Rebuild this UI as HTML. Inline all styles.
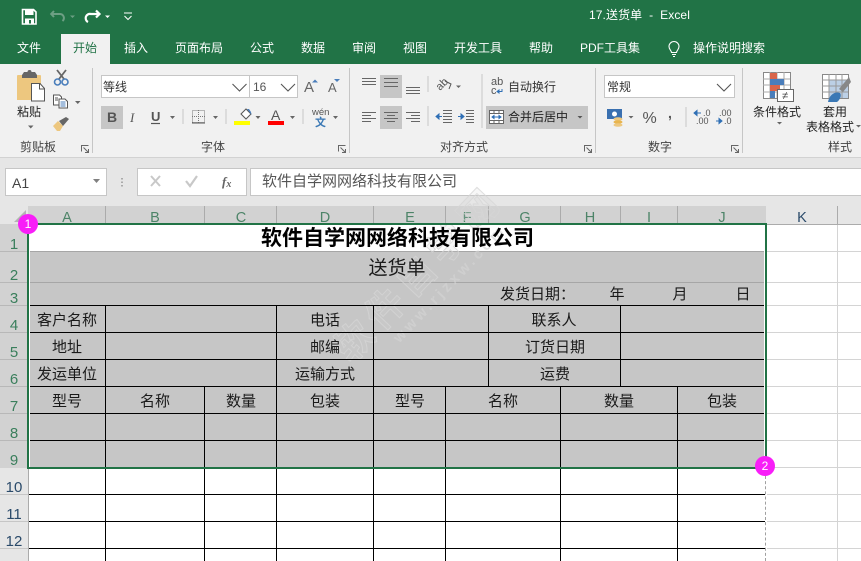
<!DOCTYPE html>
<html lang="zh"><head><meta charset="utf-8"><title>17.送货单 - Excel</title>
<style>
html,body{margin:0;padding:0}
body{width:861px;height:561px;overflow:hidden;position:relative;background:#fff;font-family:"Liberation Sans","Noto Sans CJK SC",sans-serif;color:#333}
div,span,svg{position:absolute}
.t{white-space:nowrap;font-size:12px;line-height:16px}
.w{color:#fff}
.g{font-size:12px;line-height:16px;white-space:nowrap;color:#444}
.box{background:#fff;border:1px solid #c6c6c6;box-sizing:border-box}
.c{font-size:15px;line-height:20px;color:#1a1a1a;white-space:nowrap;transform:translateX(-50%);letter-spacing:0}
.ch{font-size:14.500px;line-height:18px;top:209px;color:#4d8468;transform:translateX(-50%)}
.rh{font-size:15px;line-height:18px;left:0;width:28px;text-align:center;color:#3a7f5c}
.rn{color:#2a4a6a}
.k{background:#000}
</style></head><body>

<!-- title bar -->
<div style="left:0;top:0;width:861px;height:64px;background:#217346"></div>
<svg style="left:0;top:0" width="170" height="34" viewBox="0 0 170 34">
<path d="M22.500 9.500h11l2.500 2.500v12h-13.500z" fill="none" stroke="#fff" stroke-width="1.600"/>
<rect x="25" y="10" width="8.500" height="5" fill="#fff"/>
<rect x="25" y="18.500" width="9" height="5.500" fill="#fff"/><rect x="29" y="20" width="2" height="3.500" fill="#217346"/>
<path d="M54 11l-2.800 3 2.800 3M52 14h7.500a4 4 0 0 1 3 7" fill="none" stroke="#6d9f84" stroke-width="2"/>
<path d="M70 15.500h5l-2.500 2.500z" fill="#6d9f84"/>
<path d="M96 10.500l3.500 3.500-3.500 3.500M99 14h-8a4.300 4.300 0 0 0-3 8" fill="none" stroke="#fff" stroke-width="2.200"/>
<path d="M105 15.500h5l-2.500 2.500z" fill="#fff"/>
<path d="M124 13h8" stroke="#fff" stroke-width="1" fill="none"/>
<path d="M124.500 16l3.500 3.500 3.500-3.500" stroke="#fff" stroke-width="1" fill="none"/>
</svg>
<span class="t w" style="left:589px;top:7px;letter-spacing:.1px">17.送货单&nbsp;&nbsp;-&nbsp;&nbsp;Excel</span>

<!-- tabs -->
<div style="left:61px;top:34px;width:49px;height:30px;background:#f1f1f1"></div>
<span class="t w" style="left:17px;top:40px">文件</span>
<span class="t" style="left:73px;top:40px;color:#217346">开始</span>
<span class="t w" style="left:124px;top:40px">插入</span>
<span class="t w" style="left:175px;top:40px">页面布局</span>
<span class="t w" style="left:250px;top:40px">公式</span>
<span class="t w" style="left:301px;top:40px">数据</span>
<span class="t w" style="left:352px;top:40px">审阅</span>
<span class="t w" style="left:403px;top:40px">视图</span>
<span class="t w" style="left:454px;top:40px">开发工具</span>
<span class="t w" style="left:529px;top:40px">帮助</span>
<span class="t w" style="left:580px;top:40px">PDF工具集</span>
<svg style="left:665px;top:40px" width="18" height="18" viewBox="0 0 18 18"><path d="M6.500 12.500c0-2-2.500-3-2.500-6a5 5 0 0 1 10 0c0 3-2.500 4-2.500 6zM7 14.500h4M8 16.500h2" fill="none" stroke="#fff" stroke-width="1.100"/></svg>
<span class="t w" style="left:693px;top:40px">操作说明搜索</span>

<!-- ribbon -->
<div style="left:0;top:64px;width:861px;height:93px;background:#f1f1f1;border-bottom:1px solid #d2d2d2"></div>
<div style="left:0;top:158px;width:861px;height:48px;background:#e6e6e6"></div>
<div style="left:92px;top:68px;width:1px;height:85px;background:#c6c6c6"></div>
<div style="left:349px;top:68px;width:1px;height:85px;background:#c6c6c6"></div>
<div style="left:595px;top:68px;width:1px;height:85px;background:#c6c6c6"></div>
<div style="left:742px;top:68px;width:1px;height:85px;background:#c6c6c6"></div>

<!-- clipboard icons -->
<svg style="left:0;top:64px" width="92" height="72" viewBox="0 0 92 72">
<path d="M17 12a1 1 0 0 1 1-1h22a1 1 0 0 1 1 1v24h-24z" fill="#edc77f"/>
<path d="M22 11l2-3h3.500a2 2 0 0 1 4 0H35l2 3v3H22z" fill="#666"/>
<path d="M31.500 19.500h8.500l4.500 5v12.500h-13z" fill="#fff" stroke="#555" stroke-width="1"/>
<path d="M39.500 19.500v5.500h5" fill="none" stroke="#555"/>
<path d="M57 6l7 9M66 6l-7 9" stroke="#666" stroke-width="1.800" fill="none"/>
<circle cx="57.500" cy="18" r="3" fill="none" stroke="#4a7ebb" stroke-width="1.600"/><circle cx="65" cy="18" r="3" fill="none" stroke="#4a7ebb" stroke-width="1.600"/>
<path d="M53.500 31h6l2 2v8h-8z" fill="#fff" stroke="#555"/><path d="M59 35h6l2.500 2.500V44H59z" fill="#fff" stroke="#555"/>
<path d="M60.500 38h5M60.500 40h5M60.500 42h5" stroke="#4a7ebb" fill="none"/><path d="M55 34h3M55 36h3" stroke="#555"/>
<path d="M75 37h5.500l-2.750 3z" fill="#666"/>
<path d="M53 62l5-5 5 5-3 5h-3z" fill="#edc77f"/><path d="M59 57l7-4 3 2-6 7z" fill="#666"/>
<path d="M28 61.500h5.500l-2.750 3z" fill="#666"/>
</svg>
<span class="t" style="left:17px;top:104px;color:#222">粘贴</span>
<span class="g" style="left:20px;top:139px">剪贴板</span>

<!-- font group -->
<div class="box" style="left:101px;top:75px;width:149px;height:23px"></div>
<div class="box" style="left:249px;top:75px;width:49px;height:23px"></div>
<span class="t" style="left:103px;top:79px;color:#333">等线</span>
<span class="t" style="left:253px;top:79px;color:#555">16</span>
<div style="left:101px;top:106px;width:22px;height:23px;background:#c6c6c6"></div>
<svg style="left:100px;top:64px" width="250" height="70" viewBox="0 0 250 70">
<path d="M132.500 20l7 7 7-7M181 20l7 7 7-7" fill="none" stroke="#555" stroke-width="1.100"/>
<text x="204" y="28" font-size="15" fill="#666" font-family="Liberation Sans">A</text>
<path d="M212 18.500h6l-3-3z" fill="#4a7ebb"/>
<text x="228" y="28" font-size="13" fill="#666" font-family="Liberation Sans">A</text>
<path d="M234 15h6l-3 3z" fill="#4a7ebb"/>
<text x="7" y="58" font-size="14" font-weight="bold" fill="#555" font-family="Liberation Sans">B</text>
<text x="30" y="58" font-size="13" font-style="italic" fill="#555" font-family="Liberation Serif">I</text>
<text x="51" y="57" font-size="13" font-weight="bold" fill="#555" font-family="Liberation Sans">U</text>
<path d="M51 59.500h9" stroke="#555" stroke-width="1.200"/>
<path d="M70 52h5l-2.500 3zM113 52h5l-2.500 3zM155.500 52h5l-2.500 3zM190 52h5l-2.500 3zM233 52h5l-2.500 3z" fill="#666"/>
<path d="M83 45v15" stroke="#c6c6c6"/><path d="M126 45v15" stroke="#c6c6c6"/><path d="M203 45v15" stroke="#c6c6c6"/>
<rect x="92.500" y="46.500" width="12" height="12" fill="none" stroke="#777" stroke-dasharray="1 1"/>
<path d="M98.500 46v13M92 52.500h13" stroke="#777" stroke-dasharray="1 1" fill="none"/>
<path d="M92 59h13" stroke="#555"/>
<path d="M141 50l5-5 5 5-5 5z" fill="#fff" stroke="#555"/><path d="M147 45h2l2 3 .5 3z" fill="#4a7ebb"/>
<rect x="134" y="57" width="16" height="4" fill="#ff0"/>
<text x="171" y="56" font-size="14" fill="#555" font-family="Liberation Sans">A</text>
<rect x="168" y="57" width="16" height="4" fill="#f00"/>
<text x="212" y="51" font-size="9.500" fill="#555" font-family="Liberation Sans">wén</text>
<text x="215" y="62" font-size="11" font-weight="bold" fill="#3a78b5" font-family="Noto Sans CJK SC">文</text>
</svg>
<span class="g" style="left:201px;top:139px">字体</span>

<!-- alignment group -->
<div style="left:380px;top:75px;width:22px;height:23px;background:#c6c6c6"></div>
<div style="left:380px;top:106px;width:22px;height:23px;background:#c6c6c6"></div>
<div style="left:486px;top:106px;width:102px;height:23px;background:#c6c6c6"></div>
<svg style="left:355px;top:64px" width="240" height="70" viewBox="0 0 240 70">
<path d="M7 14.500h14M7 17.500h14M7 20.500h14" stroke="#666" fill="none"/>
<path d="M29 17.500h14M29 21.500h14M29 25.500h14" stroke="#666" fill="none" transform="translate(0 -3)"/>
<path d="M51 23.500h14M51 26.500h14M51 29.500h14" stroke="#666" fill="none"/>
<path d="M7 48.500h14M7 51.500h9M7 54.500h14M7 57.500h9" stroke="#666" fill="none"/>
<path d="M29 48.500h14M32 51.500h8M29 54.500h14M32 57.500h8" stroke="#666" fill="none"/>
<path d="M51 48.500h14M56 51.500h9M51 54.500h14M56 57.500h9" stroke="#666" fill="none"/>
<path d="M73 12v16" stroke="#c6c6c6"/><path d="M73 42v20" stroke="#c6c6c6"/>
<path d="M127 10v54" stroke="#c6c6c6"/>
<text x="0" y="0" font-size="11" fill="#555" font-family="Liberation Sans" transform="translate(85 27) rotate(-45)">ab</text>
<path d="M90 17l6 3-2 5" fill="none" stroke="#555"/>
<path d="M101 21.500h5l-2.500 2.500z" fill="#666"/>
<path d="M81 52.500h6M81 52.500l3-2.500v5z" stroke="#2f6fb5" fill="#2f6fb5"/>
<path d="M88 46.500h9M88 49.500h9M88 52.500h9M88 55.500h9M88 58.500h9" stroke="#666"/>
<path d="M103 52.500h6M109 52.500l-3-2.500v5z" stroke="#2f6fb5" fill="#2f6fb5"/>
<path d="M111 46.500h8M111 49.500h8M111 52.500h8M111 55.500h8M111 58.500h8" stroke="#666"/>
<text x="136" y="21" font-size="11" fill="#555" font-family="Liberation Sans">ab</text>
<text x="136" y="30" font-size="11" fill="#555" font-family="Liberation Sans">c</text>
<path d="M147 25v2.500h-5M142 27.500l2-1.500v3z" stroke="#2f6fb5" fill="none"/>
<rect x="134.500" y="46.500" width="14" height="13" fill="#fff" stroke="#666"/>
<path d="M134 49.500h15M134 56.500h15M139 46v3M144 46v3M139 57v3M144 57v3" stroke="#666"/>
<path d="M137 53h9M137 53l2-1.500v3zM146 53l-2-1.500v3z" stroke="#2f6fb5" fill="#2f6fb5"/>
<path d="M222.500 52h5l-2.500 2.500z" fill="#555"/>
</svg>
<span class="t" style="left:508px;top:79px">自动换行</span>
<span class="t" style="left:508px;top:109px;color:#222">合并后居中</span>
<span class="g" style="left:440px;top:139px">对齐方式</span>

<!-- number group -->
<div class="box" style="left:604px;top:75px;width:131px;height:23px"></div>
<span class="t" style="left:607px;top:79px;color:#333">常规</span>
<svg style="left:600px;top:64px" width="142" height="70" viewBox="0 0 142 70">
<path d="M117 20l7 7 7-7" fill="none" stroke="#555" stroke-width="1.100"/>
<rect x="7" y="45" width="15" height="10" fill="#3a70b0"/><circle cx="14.500" cy="50" r="2.500" fill="#fff"/>
<ellipse cx="18" cy="55" rx="4.500" ry="1.800" fill="#edc77f"/><ellipse cx="18" cy="58" rx="4.500" ry="1.800" fill="#e8b54f"/><ellipse cx="18" cy="61" rx="4.500" ry="1.800" fill="#edc77f"/>
<path d="M28.500 52h5l-2.500 2.500z" fill="#666"/>
<path d="M86 43v20" stroke="#c6c6c6"/>
<text x="42.500" y="59" font-size="16" fill="#555" font-family="Liberation Sans">%</text>
<text x="68" y="54" font-size="14" font-weight="bold" fill="#555" font-family="Liberation Sans">,</text>
<text x="103" y="52" font-size="9" fill="#555" font-family="Liberation Sans">.0</text>
<text x="96" y="60" font-size="9" fill="#555" font-family="Liberation Sans">.00</text>
<path d="M94 49h7M94 49l3-2.500v5z" stroke="#2f6fb5" fill="#2f6fb5"/>
<text x="119" y="52" font-size="9" fill="#555" font-family="Liberation Sans">.00</text>
<text x="124" y="60" font-size="9" fill="#555" font-family="Liberation Sans">.0</text>
<path d="M116 57h6M122 57l-3-2.500v5z" stroke="#2f6fb5" fill="#2f6fb5"/>
</svg>
<span class="g" style="left:648px;top:139px">数字</span>

<!-- styles -->
<svg style="left:745px;top:65px" width="116" height="70" viewBox="0 0 116 70">
<rect x="18.500" y="7.500" width="27" height="26" fill="#fff" stroke="#888"/>
<path d="M25 7v26M32 7v26M39 7v26M18 14h27M18 20h27M18 27h27" stroke="#aaa"/>
<rect x="25" y="8" width="7" height="6" fill="#d9654a"/><rect x="25" y="14" width="14" height="6" fill="#4a7ebb"/><rect x="25" y="20" width="10" height="6" fill="#d9654a"/><rect x="25" y="26" width="5" height="7" fill="#4a7ebb"/>
<rect x="32.500" y="24.500" width="16" height="12" fill="#fff" stroke="#666"/>
<text x="37" y="34" font-size="11" fill="#444" font-family="Liberation Sans">≠</text>
<rect x="77.500" y="9.500" width="26" height="24" fill="#fff" stroke="#888"/>
<rect x="84" y="15" width="19" height="18" fill="#bcd0e6"/>
<path d="M84 9v24M91 9v24M97 9v24M77 15h26M77 21h26M77 27h26" stroke="#999"/>
<path d="M94 24l10-12 2 5-8 10z" fill="#888"/>
<path d="M83 37c1-7 7-11 12-9 2 2 0 7-3 9z" fill="#3a78b5"/>
<path d="M32 57h5l-2.500 2.500z" fill="#666"/>
<path d="M111 60h5l-2.500 2.500z" fill="#666"/>
</svg>
<span class="t" style="left:753px;top:104px;color:#222">条件格式</span>
<span class="t" style="left:823px;top:104px;color:#222">套用</span>
<span class="t" style="left:806px;top:119px;color:#222">表格格式</span>
<span class="g" style="left:828px;top:139px">样式</span>

<!-- launchers -->
<svg style="left:0;top:140px" width="861" height="16" viewBox="0 0 861 16">
<g fill="none" stroke="#666">
<path d="M81.500 11.500v-6h7M83.500 7.500l4.500 4.500M88.500 9v3.500h-3.500"/>
<path d="M338.500 11.500v-6h7M340.500 7.500l4.500 4.500M345.500 9v3.500h-3.500"/>
<path d="M584.500 11.500v-6h7M586.500 7.500l4.500 4.500M591.500 9v3.500h-3.500"/>
<path d="M731.500 11.500v-6h7M733.500 7.500l4.500 4.500M738.500 9v3.500h-3.500"/>
</g></svg>

<!-- formula bar -->
<div class="box" style="left:5px;top:168px;width:102px;height:28px"></div>
<span style="left:12px;top:175px;font-size:14px;line-height:16px;color:#444">A1</span>
<svg style="left:0;top:160px" width="250" height="36" viewBox="0 0 250 36">
<path d="M93 19h7l-3.500 4z" fill="#808080"/>
<path d="M122 18v1.500M122 21.500V23M122 25v1.500" stroke="#aaa" stroke-width="2" fill="none"/>
</svg>
<div class="box" style="left:137px;top:168px;width:110px;height:28px"></div>
<svg style="left:137px;top:168px" width="110" height="28" viewBox="0 0 110 28">
<path d="M14 8l9 10M23 8l-9 10" stroke="#c8c8c8" stroke-width="2" fill="none"/>
<path d="M49 13l4 5 7-10" stroke="#c8c8c8" stroke-width="2.200" fill="none"/>
<text x="85" y="18" font-size="13" font-style="italic" font-weight="bold" fill="#666" font-family="Liberation Serif">f<tspan font-size="10" dy="1">x</tspan></text>
</svg>
<div class="box" style="left:250px;top:168px;width:611px;height:28px;border-right:0"></div>
<span style="left:262px;top:172px;font-size:15px;line-height:20px;color:#555;white-space:nowrap">软件自学网网络科技有限公司</span>

<!-- sheet backgrounds -->
<div style="left:0;top:206px;width:28px;height:355px;background:#e6e6e6"></div>
<div style="left:28px;top:206px;width:738px;height:18px;background:#d2d2d2"></div>
<div style="left:766px;top:206px;width:95px;height:18px;background:#e6e6e6"></div>
<div style="left:0;top:224px;width:28px;height:244px;background:#d2d2d2"></div>
<div style="left:28px;top:224px;width:833px;height:1px;background:#ababab"></div>
<div style="left:28px;top:468px;width:1px;height:93px;background:#ababab"></div>
<svg style="left:12px;top:208px" width="16" height="16" viewBox="0 0 16 16"><path d="M14 2v12H2z" fill="#b4b4b4"/></svg>

<!-- column header dividers -->
<div style="left:105px;top:206px;width:1px;height:18px;background:#ababab"></div>
<div style="left:204px;top:206px;width:1px;height:18px;background:#ababab"></div>
<div style="left:276px;top:206px;width:1px;height:18px;background:#ababab"></div>
<div style="left:373px;top:206px;width:1px;height:18px;background:#ababab"></div>
<div style="left:445px;top:206px;width:1px;height:18px;background:#ababab"></div>
<div style="left:488px;top:206px;width:1px;height:18px;background:#ababab"></div>
<div style="left:560px;top:206px;width:1px;height:18px;background:#ababab"></div>
<div style="left:620px;top:206px;width:1px;height:18px;background:#ababab"></div>
<div style="left:677px;top:206px;width:1px;height:18px;background:#ababab"></div>
<div style="left:837px;top:206px;width:1px;height:18px;background:#ababab"></div>
<span class="ch" style="left:67px">A</span>
<span class="ch" style="left:155px">B</span>
<span class="ch" style="left:241px">C</span>
<span class="ch" style="left:325px">D</span>
<span class="ch" style="left:410px">E</span>
<span class="ch" style="left:467px">F</span>
<span class="ch" style="left:525px">G</span>
<span class="ch" style="left:590px">H</span>
<span class="ch" style="left:649px">I</span>
<span class="ch" style="left:722px">J</span>
<span class="ch" style="left:802px;color:#2a4a6a">K</span>

<!-- row headers -->
<span class="rh" style="top:236px">1</span>
<span class="rh" style="top:267px">2</span>
<span class="rh" style="top:290px">3</span>
<span class="rh" style="top:317px">4</span>
<span class="rh" style="top:344px">5</span>
<span class="rh" style="top:371px">6</span>
<span class="rh" style="top:398px">7</span>
<span class="rh" style="top:425px">8</span>
<span class="rh" style="top:452px">9</span>
<span class="rh rn" style="top:479px">10</span>
<span class="rh rn" style="top:506px">11</span>
<span class="rh rn" style="top:533px">12</span>
<div style="left:0;top:251px;width:28px;height:1px;background:#b8b8b8"></div>
<div style="left:0;top:282px;width:28px;height:1px;background:#b8b8b8"></div>
<div style="left:0;top:305px;width:28px;height:1px;background:#b8b8b8"></div>
<div style="left:0;top:332px;width:28px;height:1px;background:#b8b8b8"></div>
<div style="left:0;top:359px;width:28px;height:1px;background:#b8b8b8"></div>
<div style="left:0;top:386px;width:28px;height:1px;background:#b8b8b8"></div>
<div style="left:0;top:413px;width:28px;height:1px;background:#b8b8b8"></div>
<div style="left:0;top:440px;width:28px;height:1px;background:#b8b8b8"></div>
<div style="left:0;top:494px;width:28px;height:1px;background:#c6c6c6"></div>
<div style="left:0;top:521px;width:28px;height:1px;background:#c6c6c6"></div>
<div style="left:0;top:548px;width:28px;height:1px;background:#c6c6c6"></div>

<!-- light grid on right -->
<div style="left:767px;top:251px;width:94px;height:1px;background:#d4d4d4"></div>
<div style="left:767px;top:282px;width:94px;height:1px;background:#d4d4d4"></div>
<div style="left:767px;top:305px;width:94px;height:1px;background:#d4d4d4"></div>
<div style="left:767px;top:332px;width:94px;height:1px;background:#d4d4d4"></div>
<div style="left:767px;top:359px;width:94px;height:1px;background:#d4d4d4"></div>
<div style="left:767px;top:386px;width:94px;height:1px;background:#d4d4d4"></div>
<div style="left:767px;top:413px;width:94px;height:1px;background:#d4d4d4"></div>
<div style="left:767px;top:440px;width:94px;height:1px;background:#d4d4d4"></div>
<div style="left:767px;top:467px;width:94px;height:1px;background:#d4d4d4"></div>
<div style="left:767px;top:494px;width:94px;height:1px;background:#d4d4d4"></div>
<div style="left:767px;top:521px;width:94px;height:1px;background:#d4d4d4"></div>
<div style="left:767px;top:548px;width:94px;height:1px;background:#d4d4d4"></div>
<div style="left:837px;top:225px;width:1px;height:336px;background:#d4d4d4"></div>

<!-- gray fill -->
<div style="left:30px;top:252px;width:734px;height:215px;background:#c6c6c6"></div>
<div style="left:30px;top:251px;width:734px;height:1px;background:#a6a6a6"></div>
<div style="left:30px;top:282px;width:734px;height:1px;background:#a6a6a6"></div>

<!-- watermark (beneath text and lines) -->
<svg style="left:0;top:0" width="861" height="561" viewBox="0 0 861 561">
<g transform="translate(418 273) rotate(-46.500)" font-family="Liberation Sans,Noto Sans CJK SC,sans-serif" text-anchor="middle">
<text x="0" y="14" font-size="38" font-weight="bold" letter-spacing="7" fill="#d0d0d0" fill-opacity=".18" stroke="#d6d6d6" stroke-width="1" stroke-opacity=".75">软件自学网</text>
<text x="14" y="35" font-size="15" font-weight="bold" letter-spacing="3.500" fill="#d6d6d6" fill-opacity=".6">www.rjzxw.com</text>
</g></svg>

<!-- table lines -->
<div class="k" style="left:30px;top:305px;width:734px;height:1px"></div>
<div class="k" style="left:30px;top:332px;width:734px;height:1px"></div>
<div class="k" style="left:30px;top:359px;width:734px;height:1px"></div>
<div class="k" style="left:30px;top:386px;width:734px;height:1px"></div>
<div class="k" style="left:30px;top:413px;width:734px;height:1px"></div>
<div class="k" style="left:30px;top:440px;width:734px;height:1px"></div>
<div class="k" style="left:29px;top:494px;width:736px;height:1px"></div>
<div class="k" style="left:29px;top:521px;width:736px;height:1px"></div>
<div class="k" style="left:29px;top:548px;width:736px;height:1px"></div>
<div class="k" style="left:105px;top:305px;width:1px;height:256px"></div>
<div class="k" style="left:204px;top:386px;width:1px;height:175px"></div>
<div class="k" style="left:276px;top:305px;width:1px;height:256px"></div>
<div class="k" style="left:373px;top:305px;width:1px;height:256px"></div>
<div class="k" style="left:445px;top:386px;width:1px;height:175px"></div>
<div class="k" style="left:488px;top:305px;width:1px;height:81px"></div>
<div class="k" style="left:560px;top:386px;width:1px;height:175px"></div>
<div class="k" style="left:620px;top:305px;width:1px;height:81px"></div>
<div class="k" style="left:677px;top:386px;width:1px;height:175px"></div>

<!-- selection border -->
<div style="left:27px;top:223px;width:740px;height:2px;background:#217346"></div>
<div style="left:27px;top:467px;width:740px;height:2px;background:#217346"></div>
<div style="left:27px;top:223px;width:2px;height:246px;background:#217346"></div>
<div style="left:765px;top:223px;width:2px;height:246px;background:#217346"></div>
<div style="left:29px;top:225px;width:1px;height:242px;background:#fff"></div>
<div style="left:764px;top:225px;width:1px;height:242px;background:#fff"></div>

<!-- cell text -->
<span class="c" style="left:397.500px;top:226px;font-size:21px;line-height:26px;font-weight:bold;color:#000">软件自学网网络科技有限公司</span>
<span class="c" style="left:397px;top:257px;font-size:19px;line-height:24px">送货单</span>
<span class="c" style="left:537.500px;top:285px">发货日期：</span>
<span class="c" style="left:617px;top:285px">年</span>
<span class="c" style="left:680px;top:285px">月</span>
<span class="c" style="left:743px;top:285px">日</span>
<span class="c" style="left:67px;top:311px">客户名称</span>
<span class="c" style="left:325px;top:311px">电话</span>
<span class="c" style="left:554px;top:311px">联系人</span>
<span class="c" style="left:67px;top:338px">地址</span>
<span class="c" style="left:325px;top:338px">邮编</span>
<span class="c" style="left:555px;top:338px">订货日期</span>
<span class="c" style="left:67px;top:365px">发运单位</span>
<span class="c" style="left:325px;top:365px">运输方式</span>
<span class="c" style="left:555px;top:365px">运费</span>
<span class="c" style="left:67px;top:392px">型号</span>
<span class="c" style="left:155px;top:392px">名称</span>
<span class="c" style="left:241px;top:392px">数量</span>
<span class="c" style="left:325px;top:392px">包装</span>
<span class="c" style="left:410px;top:392px">型号</span>
<span class="c" style="left:503px;top:392px">名称</span>
<span class="c" style="left:619px;top:392px">数量</span>
<span class="c" style="left:722px;top:392px">包装</span>

<!-- dashed line -->
<div style="left:765px;top:476px;width:0;height:85px;border-left:1px dashed #a0a0a0"></div>

<!-- badges -->
<div style="left:18px;top:214px;width:20px;height:20px;border-radius:50%;background:#f81ef8;color:#fff;font-size:12px;line-height:20px;text-align:center">1</div>
<div style="left:755px;top:456px;width:20px;height:20px;border-radius:50%;background:#f81ef8;color:#fff;font-size:12px;line-height:20px;text-align:center">2</div>
</body></html>
